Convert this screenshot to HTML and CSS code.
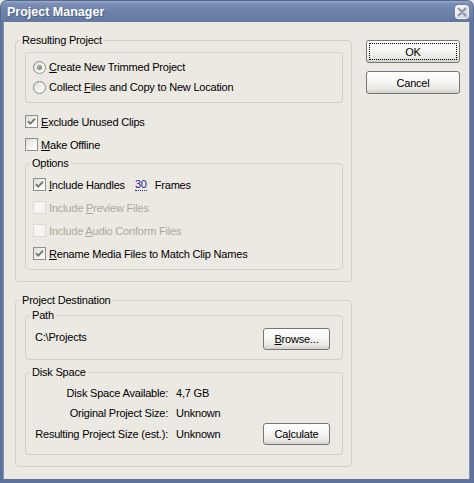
FILE: index.html
```html
<!DOCTYPE html>
<html>
<head>
<meta charset="utf-8">
<title>Project Manager</title>
<link rel="stylesheet" href="styles.css">
</head>
<body>
<div class="window">
  <div class="titlebar">
    <span class="title">Project Manager</span>
    <span class="close"><svg width="10" height="10" viewBox="0 0 10 10"><path d="M1.5 1.5 L8.5 8.5 M8.5 1.5 L1.5 8.5" stroke="#8d93a8" stroke-width="2" stroke-linecap="round"/></svg></span>
  </div>
  <div class="client">
    <div class="main">
      <fieldset class="group outer">
        <legend class="lg-outer">Resulting Project</legend>
        <div class="radiobox">
          <div class="row r20"><span class="radio on"></span><span class="lbl"><u>C</u>reate New Trimmed Project</span></div>
          <div class="row r20"><span class="radio"></span><span class="lbl">Collect <u>F</u>iles and Copy to New Location</span></div>
        </div>
        <div class="row r23 after-box"><span class="check on"><svg width="11" height="11" viewBox="0 0 11 11"><path d="M2 5.2 L4.3 7.6 L9 2.6" fill="none" stroke="#6f7e69" stroke-width="2"/></svg></span><span class="lbl"><u>E</u>xclude Unused Clips</span></div>
        <div class="row r23"><span class="check"></span><span class="lbl"><u>M</u>ake Offline</span></div>
        <fieldset class="group options">
          <legend class="lg-inner">Options</legend>
          <div class="row r23"><span class="check on"><svg width="11" height="11" viewBox="0 0 11 11"><path d="M2 5.2 L4.3 7.6 L9 2.6" fill="none" stroke="#6f7e69" stroke-width="2"/></svg></span><span class="lbl"><u>I</u>nclude Handles</span><span class="num">30</span><span class="frames">Frames</span></div>
          <div class="row r23 disabled"><span class="check"></span><span class="lbl">Include <u>P</u>review Files</span></div>
          <div class="row r23 disabled"><span class="check"></span><span class="lbl">Include <u>A</u>udio Conform Files</span></div>
          <div class="row r23"><span class="check on"><svg width="11" height="11" viewBox="0 0 11 11"><path d="M2 5.2 L4.3 7.6 L9 2.6" fill="none" stroke="#6f7e69" stroke-width="2"/></svg></span><span class="lbl"><u>R</u>ename Media Files to Match Clip Names</span></div>
        </fieldset>
      </fieldset>

      <fieldset class="group outer dest">
        <legend class="lg-outer">Project Destination</legend>
        <fieldset class="group path">
          <legend class="lg-path">Path</legend>
          <div class="path-row">
            <span class="path-text">C:\Projects</span>
            <button class="btn small"><u>B</u>rowse...</button>
          </div>
        </fieldset>
        <fieldset class="group disk">
          <legend class="lg-inner">Disk Space</legend>
          <div class="disk-grid">
            <div class="drow r20"><span class="dk">Disk Space Available:</span><span class="dv">4,7 GB</span></div>
            <div class="drow r20"><span class="dk">Original Project Size:</span><span class="dv">Unknown</span></div>
            <div class="drow r22"><span class="dk">Resulting Project Size (est.):</span><span class="dv">Unknown</span><button class="btn small calc">Ca<u>l</u>culate</button></div>
          </div>
        </fieldset>
      </fieldset>
    </div>
    <div class="side">
      <button class="btn big default"><span class="focus">OK</span></button>
      <button class="btn big">Cancel</button>
    </div>
  </div>
</div>
</body>
</html>
```
FILE: styles.css
```css
html, body {
  margin: 0;
  padding: 0;
  background: #ece9e3;
}
body {
  font-family: "Liberation Sans", Arial, sans-serif;
  font-size: 11px;
  letter-spacing: -0.2px;
  color: #000;
}
.window {
  width: 474px;
  height: 483px;
  display: flex;
  flex-direction: column;
  box-sizing: border-box;
}
.titlebar {
  height: 22px;
  flex: none;
  box-sizing: border-box;
  border-radius: 7px 7px 0 0;
  background: linear-gradient(#a3b1cd 0, #7e91b8 2px, #6f83ac 40%, #6478a2 100%);
  border: 1px solid #55688f;
  border-bottom: none;
  display: flex;
  align-items: center;
  justify-content: space-between;
  padding: 0 4px 0 6px;
}
.title {
  color: #fff;
  font-weight: bold;
  font-size: 12.5px;
  letter-spacing: 0;
  text-shadow: 1px 1px 0 #4e6088;
  margin-top: 1px;
}
.close {
  width: 14px;
  height: 14px;
  box-sizing: border-box;
  border: 1px solid #f4f6fa;
  border-radius: 3px;
  background: linear-gradient(135deg, #fbfcfd 0, #e4e7ee 50%, #c4c9d6 100%);
  display: flex;
  align-items: center;
  justify-content: center;
  margin-top: 1px;
  box-shadow: 0 0 0 1px #6d80a8;
}
.client {
  flex: 1;
  display: flex;
  border-left: 3px solid #5f729c;
  border-right: 4px solid #5f729c;
  border-bottom: 4px solid #5f729c;
  box-shadow: inset 1px 0 0 #8394ba, inset -1px 0 0 #8394ba;
  padding: 11px 0 0 12px;
  background: #ece9e3;
}
.main {
  width: 337px;
  flex: none;
  display: flex;
  flex-direction: column;
}
.side {
  margin-left: 14px;
  margin-top: 7px;
  display: flex;
  flex-direction: column;
  gap: 8px;
}
.group {
  margin: 0;
  border: 1px solid #d2d0c6;
  border-radius: 4px;
  min-width: 0;
  box-sizing: border-box;
}
legend {
  line-height: 14px;
  padding: 0 2px;
  font-size: 11px;
}
.outer {
  padding: 5px 8px 11px 9px;
}
.lg-outer { margin-left: -5px; }
.lg-inner { margin-left: -3px; }
.lg-path { margin-left: -5px; }
.dest {
  margin-top: 11px;
  padding-top: 1px;
}
.radiobox {
  border: 1px solid #d2d0c6;
  border-radius: 4px;
  padding: 4px 8px 5px 7px;
}
.row {
  display: flex;
  align-items: center;
}
.r20 { height: 20px; }
.r22 { height: 22px; }
.r23 { height: 23px; }
.after-box { margin-top: 7px; }
.lbl { margin-left: 3px; white-space: nowrap; }
.radio {
  width: 13px;
  height: 13px;
  box-sizing: border-box;
  border: 1px solid #8c8c88;
  border-radius: 50%;
  background: linear-gradient(135deg, #dcdbd5 0, #f3f3f0 55%, #ffffff 100%);
  display: inline-flex;
  align-items: center;
  justify-content: center;
  flex: none;
}
.radio.on::after {
  content: "";
  width: 5px;
  height: 5px;
  border-radius: 50%;
  background: radial-gradient(circle at 35% 35%, #a6ad9f, #6b7564);
}
.check {
  width: 13px;
  height: 13px;
  box-sizing: border-box;
  border: 1px solid #8e8e8a;
  background: linear-gradient(135deg, #dcdbd5 0, #f3f3f0 55%, #ffffff 100%);
  display: inline-flex;
  align-items: center;
  justify-content: center;
  flex: none;
}
.check svg { display: block; }
.disabled { color: #aca899; }
.disabled .check {
  border-color: #dcdad2;
  background: #f6f5f1;
}
.options {
  padding: 3px 8px 4px 7px;
}
.num {
  color: #23238c;
  margin-left: 10px;
  line-height: 11px;
  border-bottom: 1px dotted #23238c;
}
.frames { margin-left: 8px; }
.path {
  padding: 6px 12px 9px 9px;
}
.path-row {
  display: flex;
  justify-content: space-between;
  align-items: flex-start;
}
.path-text { margin-top: 3px; }
.disk {
  margin-top: 5px;
  padding: 4px 12px 9px 7px;
}
.disk-grid {
  display: flex;
  flex-direction: column;
}
.drow {
  display: flex;
  align-items: center;
}
.dk {
  width: 135px;
  text-align: right;
  white-space: nowrap;
}
.dv {
  margin-left: 8px;
}
.btn {
  font-family: "Liberation Sans", Arial, sans-serif;
  font-size: 11px;
  letter-spacing: -0.2px;
  color: #000;
  border: 1px solid #767676;
  border-radius: 3px;
  background: linear-gradient(#ffffff 0, #f7f7f5 45%, #e8e7e2 80%, #d2d1cb 100%);
  padding: 0;
  box-sizing: border-box;
  display: flex;
  align-items: center;
  justify-content: center;
}
.btn.big {
  width: 94px;
  height: 23px;
}
.btn.small {
  width: 67px;
  height: 22px;
}
.calc { margin-left: auto; }
.default .focus {
  width: 88px;
  height: 17px;
  box-sizing: border-box;
  border: 1px dotted #000;
  display: flex;
  align-items: center;
  justify-content: center;
}
```
